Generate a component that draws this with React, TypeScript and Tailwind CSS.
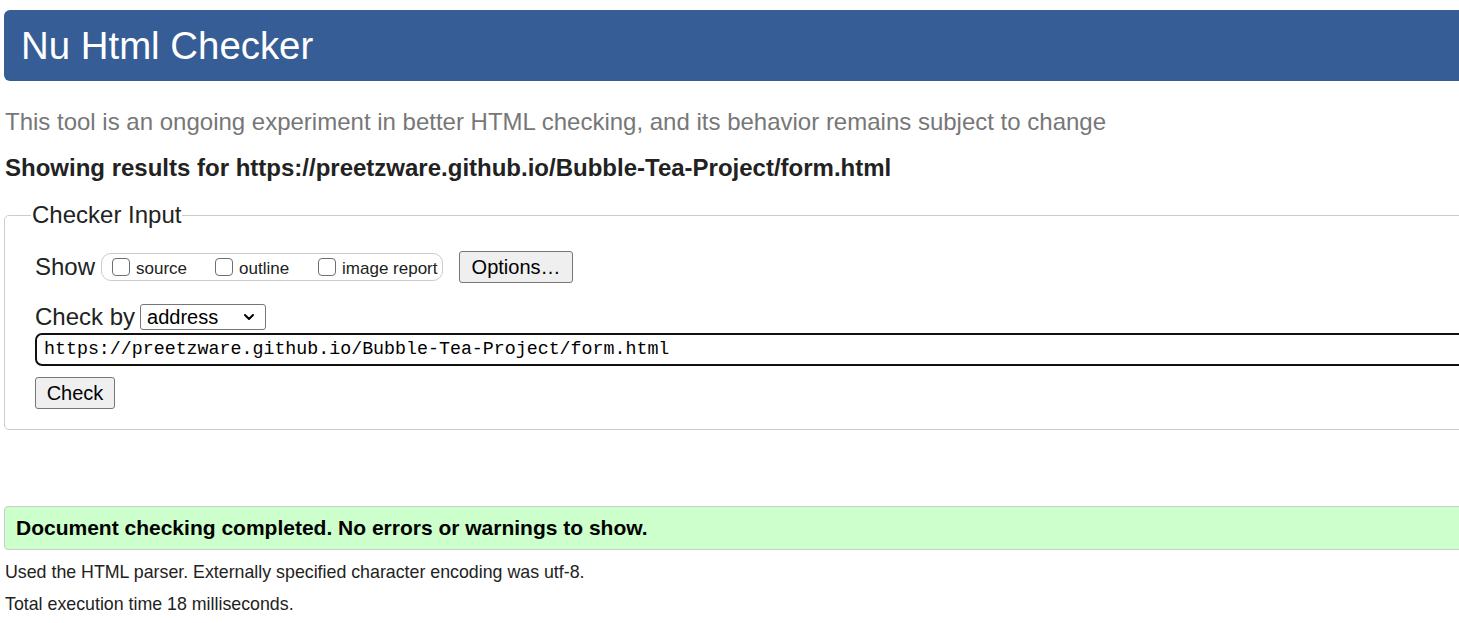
import { ChevronDown } from "lucide-react";

const sans = "font-['Liberation_Sans',Arial,sans-serif]";

function Box({ label, wide }: { label: string; wide?: boolean }) {
  return (
    <label className={`flex items-center ${wide ? "" : "w-[103px]"}`}>
      <span className="w-[18px] h-[18px] border-[1.5px] border-[#6f6f6f] rounded-[4px] bg-white" />
      <span className="ml-[6px] text-[17px] leading-[20px] mt-[3px] text-[#222]">{label}</span>
    </label>
  );
}

export default function App() {
  return (
    <div className={`w-[1459px] h-[623px] overflow-hidden bg-white ${sans}`}>
      <div className="w-[1500px]">
        <h1 className="ml-[4px] mt-[10px] h-[71px] rounded-l-[6px] bg-[#365d95] pl-[17px] text-[38.4px] leading-[71px] text-white">
          Nu Html Checker
        </h1>

        <p className="ml-[5px] mt-[26px] text-[24px] leading-[30px] text-[#777]">
          This tool is an ongoing experiment in better HTML checking, and its behavior remains subject to change
        </p>
        <p className="ml-[5px] mt-[17px] text-[24px] leading-[28px] font-bold text-[#222]">
          Showing results for https://preetzware.github.io/Bubble-Tea-Project/form.html
        </p>

        <fieldset className="ml-[4px] mt-[20px] h-[228px] border border-[#ccc] rounded-[5px] pl-[30px]">
          <legend className="-ml-[4px] px-[1px] text-[24px] leading-[26px] text-[#222]">Checker Input</legend>

          <div className="mt-[21px] flex items-center">
            <span className="text-[24px] text-[#222]">Show</span>
            <div className="ml-[6px] h-[28px] w-[342px] flex items-center border border-[#ccc] rounded-[10px] pl-[10px]">
              <Box label="source" />
              <Box label="outline" />
              <Box label="image report" wide />
            </div>
            <button className="ml-[16px] h-[32px] w-[114px] bg-[#efefef] border border-[#767676] rounded-[3px] text-[20px] text-black">
              Options…
            </button>
          </div>

          <div className="mt-[19px] h-[26px] flex items-center">
            <span className="text-[24px] leading-[26px] text-[#222]">Check by</span>
            <div className="ml-[5px] h-[26px] w-[126px] border border-[#767676] rounded-[3px] flex items-center pl-[6px] pr-[8px] justify-between">
              <span className="text-[20px] leading-[24px] text-black">address</span>
              <ChevronDown className="w-[16px] h-[16px] text-black" strokeWidth={3} />
            </div>
          </div>

          <div className="mt-[3px] h-[33px] border-2 border-[#111] rounded-[7px] flex items-center pl-[7px]">
            <span className="font-['Liberation_Mono',monospace] text-[18.3px] text-black">
              https://preetzware.github.io/Bubble-Tea-Project/form.html
            </span>
          </div>

          <button className="mt-[11px] h-[32px] w-[80px] bg-[#efefef] border border-[#767676] rounded-[3px] text-[20px] text-black">
            Check
          </button>
        </fieldset>

        <div className="ml-[4px] mt-[76px] h-[44px] bg-[#ccffcc] border border-[#ccc] rounded-l-[4px] flex items-center pl-[11px]">
          <span className="text-[21px] font-bold text-black">Document checking completed. No errors or warnings to show.</span>
        </div>

        <p className="ml-[5px] mt-[10px] text-[17.8px] leading-[24px] text-[#222]">
          Used the HTML parser. Externally specified character encoding was utf-8.
        </p>
        <p className="ml-[5px] mt-[8px] text-[17.8px] leading-[24px] text-[#222]">Total execution time 18 milliseconds.</p>
      </div>
    </div>
  );
}
